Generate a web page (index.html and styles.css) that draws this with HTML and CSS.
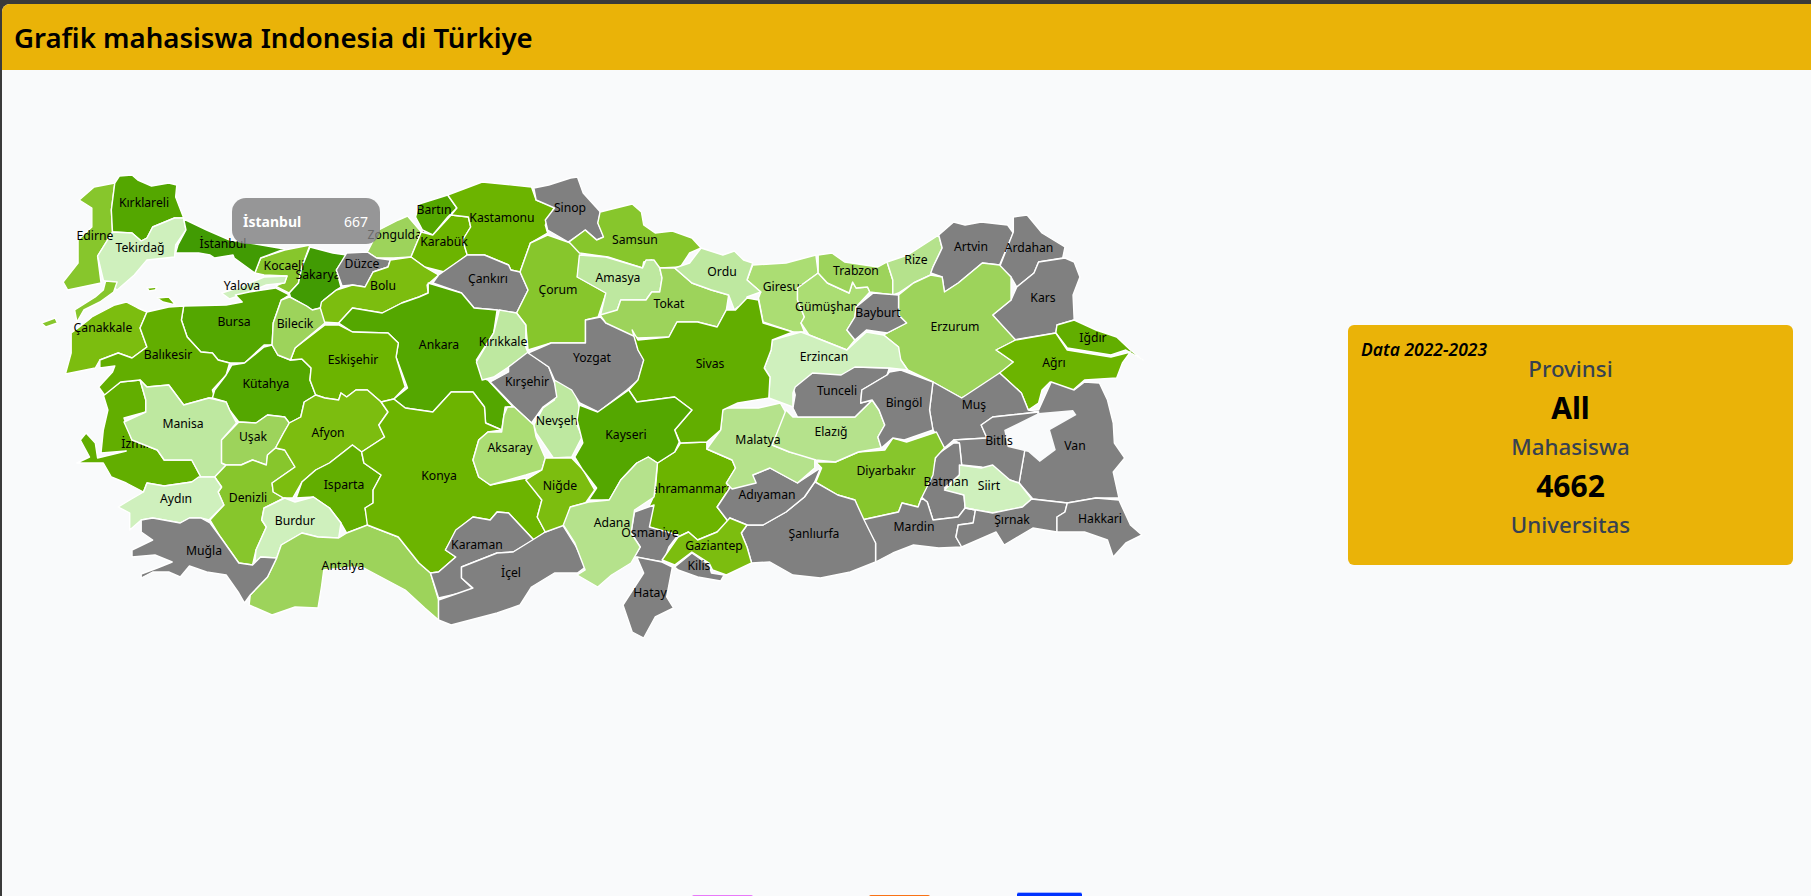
FILE: index.html
```html
<!DOCTYPE html>
<html lang="id">
<head>
    <meta charset="UTF-8" />
    <meta name="viewport" content="width=device-width, initial-scale=1.0" />
    <title>Grafik mahasiswa Indonesia di Türkiye</title>
    <link rel="stylesheet" href="styles.css">
</head>
<body>
    <div class="app">
        <header class="topbar">
            <h1>Grafik mahasiswa Indonesia di Türkiye</h1>
        </header>

        <main class="content">
            <div class="map-box">
                <svg class="map" viewBox="2 70 1148 750" width="1148" height="750">
                    <!-- provinsi yang labelnya tertutup tetangga digambar lebih dulu -->
                    <g transform="translate(-83 0) scale(1.148 1)">
                        <polygon class="s-h" points="665,443 688,442 688,449 710,460 713,468 705,483 708,488 697,507 707,522 697,532 680,540 672,532 663,537 638,527 637,508 643,493 645,463 660,452" />
                    </g>
                    <text x="691" y="488">Kahramanmaraş</text>
                    <g transform="scale(1.148 1)">
                        <polygon class="s-i" points="90,395 105,382 122,380 127,400 127,412 108,418 115,440 137,450 143,460 167,460 175,477 167,482 143,486 128,483 125,492 110,483 97,477 90,463 67,463 78,457 70,440 75,433 83,443 85,458 110,451 88,453 90,430 94,410" />
                    </g>
                    <text x="136" y="443">İzmir</text>
                    <g transform="scale(1.148 1)">
                        <polygon class="s-b" points="483,380 500,388 505,408 502,423 507,437 498,457 482,458 467,433 465,425 473,408 483,400" />
                        <polygon class="s-f" points="227,258 248,250 270,245 263,267 260,283 252,293 240,286 248,282 250,276 230,275 222,273" />
                        <polygon class="s-k" points="270,247 290,253 302,255 293,270 297,287 293,290 282,300 279,308 272,310 267,306 253,297 252,293 260,283 263,267" />
                        <polygon class="s-e" points="355,216 367,232 358,257 343,258 328,258 320,252 330,230 347,220" />
                    </g>
                    <text x="561" y="420">Nevşehir</text>
                    <text x="318" y="274">Sakarya</text>
                    <text x="398" y="234">Zonguldak</text>
                    <g transform="translate(-83 0) scale(1.148 1)">
                        <polygon class="s-d" points="728,265 757,263 783,255 785,273 767,288 767,300 773,317 770,323 773,332 763,332 737,322 733,298 735,292 723,280" />
                    </g>
                    <text x="785" y="286">Giresun</text>
                    <g transform="translate(-83 0) scale(1.148 1)">
                        <polygon class="s-d" points="785,273 793,283 812,293 815,282 818,288 828,287 830,292 818,307 817,317 810,330 817,340 810,350 777,335 770,323 773,317 767,300 767,288" />
                    </g>
                    <text x="830" y="306">Gümüşhane</text>

                    <g transform="scale(1.148 1)">
                        <polygon class="s-f" points="100,183 82,187 69,200 80,208 80,227 68,240 68,263 55,282 59,290 88,283 85,256 98,232 97,210" />
                        <polygon class="s-j" points="100,183 104,176 115,175 120,180 132,186 147,183 154,185 153,197 160,218 152,218 133,227 128,238 123,241 115,233 98,232 97,210" />
                        <polygon class="s-a" points="98,232 115,233 123,241 128,238 133,227 152,218 160,218 162,230 153,245 152,257 128,260 117,275 102,290 90,280 85,256" />
                        <polygon class="s-k" points="160,219 180,230 200,240 217,243 248,249 227,258 222,273 204,258 203,255 187,258 183,255 173,253 153,253 155,245 162,230" />
                        <polygon class="s-a" points="193,293 207,288 230,277 250,276 248,283 232,285 215,293 200,299" />
                        <polygon class="s-n" points="302,253 320,252 328,258 340,260 338,267 325,272 318,287 307,285 298,286 293,270" />
                        <polygon class="s-j" points="365,204 390,195 398,208 390,217 377,235 368,230 362,217" />
                        <polygon class="s-h" points="377,235 393,215 408,217 410,227 403,240 407,255 387,272 370,267 358,257 367,232" />
                        <polygon class="s-h" points="390,195 420,182 463,187 467,200 483,207 475,225 477,233 462,243 453,272 445,270 443,265 422,255 407,255 403,240 410,227 408,217 393,215 398,208" />
                        <polygon class="s-g" points="280,302 293,290 307,285 318,287 325,272 338,267 340,260 358,257 370,267 382,275 372,285 373,293 365,297 350,303 333,313 307,308 295,323 280,322 279,308" />
                        <polygon class="s-n" points="382,275 407,255 422,255 443,265 445,270 453,272 460,290 450,313 433,310 413,308 402,293 377,283" />
                        <polygon class="s-j" points="373,283 402,293 413,308 433,310 430,333 415,360 420,378 425,380 447,407 440,407 437,430 423,423 422,407 412,392 393,392 377,412 353,408 343,399 355,388 345,357 347,343 338,333 307,332 295,323 307,308 333,313 350,303 365,297 373,293" />
                        <polygon class="s-f" points="462,243 477,235 497,243 507,253 505,257 503,277 528,293 521,317 510,320 510,343 480,343 460,350 458,325 450,313 460,290 453,272" />
                        <polygon class="s-b" points="435,310 450,313 458,325 458,347 460,353 443,367 430,377 420,380 415,362 430,333" />
                        <polygon class="s-n" points="460,352 478,367 483,383 485,397 473,407 463,423 448,407 427,382 443,372 443,367" />
                        <polygon class="s-n" points="460,353 480,343 510,343 510,320 523,317 528,323 551,330 556,350 561,360 556,380 546,390 521,412 505,403 498,390 483,380 478,367" />
                        <polygon class="s-n" points="465,188 478,185 497,178 503,177 508,193 523,212 521,223 526,237 520,240 510,230 495,242 477,230 475,220 483,208 467,200" />
                        <polygon class="s-j" points="160,306 197,305 211,302 205,295 217,292 240,288 252,295 245,300 238,323 237,345 230,345 213,363 200,363 190,360 185,353 175,352 163,337 158,320" />
                        <polygon class="s-g" points="80,317 100,305 110,302 120,308 128,312 122,328 128,347 115,358 103,353 87,360 83,368 57,374 62,353 62,333 68,328 77,320" />
                        <polygon class="s-f" points="92,281 102,282 99,292 87,302 73,310 67,322 65,310 83,297 90,290" />
                        <polygon class="s-f" points="36,323 48,318 50,323 40,327" />
                        <polygon class="s-h" points="137,298 147,297 153,305 142,302" />
                        <polygon class="s-h" points="128,288 137,287 135,290 130,291" />
                        <polygon class="s-i" points="128,312 147,307 160,306 158,320 163,337 175,352 185,353 190,360 200,363 197,375 185,390 187,398 182,398 160,405 147,385 128,387 122,380 105,382 91,395 86,387 98,372 100,366 87,368 87,360 103,353 115,358 128,347 122,328" />
                        <polygon class="s-j" points="202,365 213,363 230,347 237,345 242,355 253,360 263,359 271,368 270,380 275,395 265,402 262,417 252,423 248,417 233,415 223,423 208,422 200,410 197,402 185,398 187,390 197,375" />
                        <polygon class="s-h" points="253,360 257,348 283,325 295,325 307,332 338,333 347,343 345,357 353,387 343,399 332,402 320,390 310,390 302,397 297,393 295,400 283,398 275,395 270,380 271,368 263,359" />
                        <polygon class="s-e" points="245,300 252,297 267,306 272,310 279,308 283,323 257,348 253,360 242,355 237,345 238,323" />
                        <polygon class="s-b" points="122,380 128,387 147,385 160,405 182,398 197,402 200,410 206,423 193,440 193,463 197,465 187,477 175,477 167,460 143,460 137,450 115,440 108,422 127,412 127,400" />
                        <polygon class="s-e" points="208,422 223,423 233,415 248,417 252,423 247,433 240,448 233,455 232,465 220,460 210,465 197,465 193,463 193,440" />
                        <polygon class="s-f" points="197,465 210,465 220,460 232,465 233,455 240,448 248,450 257,467 237,483 238,492 247,498 230,508 228,520 232,527 223,550 220,565 208,563 192,537 183,520 195,505 190,492 193,487 187,477" />
                        <polygon class="s-g" points="265,402 275,395 283,398 295,400 297,393 302,397 310,390 320,390 332,402 338,412 330,425 335,437 315,452 307,445 287,463 275,470 263,482 255,498 247,498 238,492 237,483 257,467 248,450 240,448 247,433 252,423 262,417" />
                        <polygon class="s-i" points="307,445 315,452 317,463 332,475 325,490 325,503 318,508 321,525 302,533 297,523 287,508 273,497 258,498 263,482 275,470 287,463" />
                        <polygon class="s-a" points="230,508 248,498 257,502 273,497 287,508 297,523 295,538 277,537 263,533 245,545 241,558 227,557 222,563 223,550 232,527 228,520" />
                        <polygon class="s-e" points="241,558 245,545 263,533 277,537 295,538 302,533 320,525 347,537 365,563 375,573 382,600 382,620 370,608 353,590 317,568 308,567 282,570 280,587 277,608 257,607 237,615 217,605 218,595 233,577" />
                        <polygon class="s-h" points="338,412 332,402 343,399 353,408 377,412 393,392 412,392 422,407 423,423 437,430 425,432 417,440 412,460 417,477 427,485 458,478 472,500 468,517 475,532 465,540 443,513 433,512 427,520 412,517 398,530 388,550 397,557 382,572 375,573 365,563 347,537 320,525 318,508 325,503 325,490 332,475 317,463 315,452 335,437 330,425" />
                        <polygon class="s-n" points="397,530 412,517 427,520 433,512 443,513 465,540 447,552 433,553 402,567 402,578 413,590 382,598 375,573 382,572 397,557 388,550" />
                        <polygon class="s-n" points="382,600 412,588 402,578 402,567 433,553 447,552 475,532 490,525 502,547 510,567 503,573 483,573 463,587 453,605 433,613 393,625 382,620" />
                        <polygon class="s-a" points="103,507 113,500 125,492 128,483 143,486 167,482 173,477 187,477 193,487 190,492 195,505 182,520 175,518 165,518 157,523 133,518 123,520 113,530 113,513" />
                        <polygon class="s-n" points="123,520 133,518 157,523 165,518 175,518 183,523 192,537 208,563 220,565 227,557 241,558 233,577 218,595 213,603 208,593 197,575 180,572 165,566 157,577 147,572 133,572 123,578 123,574 137,568 150,562 135,555 115,557 115,550 133,540 123,532" />
                        <polygon class="s-d" points="442,407 448,407 465,425 467,437 475,458 472,470 458,475 427,485 417,477 412,460 417,440 425,432 437,432 439,415" />
                        <polygon class="s-g" points="475,458 482,458 498,458 508,470 518,490 510,503 497,507 492,525 475,532 468,517 472,500 458,480 472,470" />
                    </g>

                    <g transform="translate(-83 0) scale(1.148 1)">
                        <polygon class="s-f" points="595,212 623,204 631,212 633,225 643,233 658,231 675,238 683,248 673,253 665,267 647,268 640,260 633,262 632,268 602,257 577,253 568,242 582,230 592,240 598,237 593,223" />
                        <polygon class="s-b" points="577,255 600,257 632,268 635,260 642,260 647,268 649,278 647,292 640,292 635,300 613,300 610,310 595,317 600,293 575,277" />
                        <polygon class="s-e" points="647,268 660,268 675,283 692,290 707,295 705,310 697,327 680,322 662,322 655,337 628,338 600,323 595,315 610,310 613,300 635,300 640,292 647,292 649,278" />
                        <polygon class="s-b" points="683,248 702,255 712,251 720,260 728,263 723,280 735,292 723,297 723,307 715,307 712,310 707,295 692,290 675,283 660,268 673,263" />
                        <polygon class="s-e" points="785,255 797,253 808,262 837,267 845,262 850,280 850,295 830,292 828,287 818,288 815,282 812,293 793,283 785,273" />
                        <polygon class="s-c" points="845,262 863,255 890,235 893,248 885,267 883,275 868,283 855,293 850,295 850,280" />
                        <polygon class="s-n" points="890,235 903,222 913,225 927,222 950,225 955,233 943,265 928,263 907,283 895,292 893,277 883,273 885,267 893,248" />
                        <polygon class="s-n" points="955,232 955,217 967,215 980,233 1000,247 998,258 977,262 973,273 958,287 953,277 943,267" />
                        <polygon class="s-n" points="977,262 1000,258 1008,262 1013,277 1007,295 1008,320 993,325 992,333 955,340 937,315 953,300 958,287 973,273" />
                        <polygon class="s-e" points="855,295 868,283 883,275 893,277 895,292 907,283 928,263 943,265 953,277 953,300 937,315 957,340 940,350 955,362 937,383 910,398 885,382 863,370 855,357 855,347 842,335 862,323 855,315" />
                        <polygon class="s-n" points="833,293 855,295 855,315 862,323 845,333 827,330 817,340 810,330 817,317 818,307" />
                        <polygon class="s-i" points="1008,320 1027,330 1045,337 1057,350 1068,360 1053,350 1040,355 1002,348 992,333 993,325" />
                        <polygon class="s-h" points="940,350 957,340 992,333 1002,350 1040,357 1057,352 1050,363 1045,378 1017,380 1005,392 987,382 980,390 977,403 968,410 962,393 943,373 955,362" />
                        <polygon class="s-n" points="977,410 988,382 1008,390 1017,382 1030,383 1037,400 1042,423 1043,443 1052,458 1042,472 1047,498 1027,498 1002,503 972,499 960,483 963,463 965,450 968,410" />
                        <polygon class="s-n" points="885,382 910,398 943,373 962,393 968,410 977,412 937,417 927,425 932,438 903,440 895,448 885,430 882,410" />
                        <polygon class="s-n" points="903,440 932,438 927,425 937,417 977,412 965,450 963,463 960,483 952,480 927,467 910,465 908,443" />
                        <polygon class="s-n" points="903,443 908,443 910,465 908,475 895,488 912,495 913,508 907,517 885,520 880,502 875,497 885,467 888,455" />
                        <polygon class="s-a" points="908,465 927,468 937,465 952,480 960,483 971,499 963,507 937,513 913,508 912,495 895,490 908,475" />
                        <polygon class="s-f" points="783,462 800,462 820,452 843,450 850,438 862,442 888,432 895,448 887,458 885,475 875,498 872,507 858,503 855,512 823,520 817,500 802,495 783,482 788,468" />
                        <polygon class="s-n" points="823,520 855,512 858,503 872,507 875,498 880,502 885,520 907,517 913,508 922,510 920,523 907,525 905,537 910,547 890,548 868,545 850,553 835,562 835,543" />
                        <polygon class="s-n" points="913,508 937,513 963,507 971,499 1002,503 1000,512 993,517 993,532 972,528 947,545 940,532 910,547 905,537 907,525 920,523 922,510" />
                        <polygon class="s-n" points="1002,503 1027,498 1047,500 1057,525 1067,535 1053,543 1042,557 1037,540 1017,532 993,532 993,517 1000,512" />
                        <polygon class="s-n" points="718,533 723,525 737,525 757,512 773,497 782,482 802,495 817,500 825,520 835,543 835,562 813,572 787,578 763,575 743,562 727,563 723,547" />
                        <polygon class="s-n" points="697,507 708,488 728,475 743,468 767,483 787,468 782,482 773,497 757,512 737,525 723,525 708,518 707,522" />
                        <polygon class="s-c" points="688,449 700,430 702,408 733,408 752,403 757,413 745,445 760,452 782,458 782,468 767,483 743,468 728,475 731,483 710,489 705,483 713,468 710,460" />
                        <polygon class="s-c" points="757,410 763,417 817,417 832,400 838,410 843,425 837,437 840,448 820,452 800,462 783,460 760,452 745,445" />
                        <polygon class="s-n" points="763,387 780,373 817,367 847,368 845,375 823,390 822,403 832,400 817,417 767,417 763,408 765,395" />
                        <polygon class="s-n" points="847,372 857,370 885,382 882,410 885,430 860,440 850,438 840,448 837,437 843,425 838,410 832,400 822,403 823,390 845,375" />
                        <polygon class="s-a" points="745,340 770,332 777,335 810,350 827,332 842,335 855,347 857,360 863,370 847,368 817,367 805,375 780,373 765,387 763,393 763,407 742,398 743,377 738,368 744,350" />
                        <polygon class="s-i" points="733,300 737,323 763,332 745,340 744,350 738,368 743,377 742,398 715,403 702,410 700,430 688,442 665,443 660,430 675,410 660,397 627,402 620,390 628,380 633,360 628,350 623,330 628,340 655,337 662,322 680,322 697,327 705,310 713,310 723,298" />
                        <polygon class="s-j" points="593,412 620,390 627,402 660,397 675,410 660,430 664,442 660,452 645,463 637,457 627,463 613,480 603,500 585,500 592,488 580,470 573,457 580,443 575,420 577,405" />
                        <polygon class="s-n" points="642,505 625,512 622,533 630,547 625,557 650,562 655,547 663,535 638,527" />
                        <polygon class="s-c" points="637,457 645,463 642,497 625,510 622,533 630,547 622,563 605,575 593,587 575,575 582,570 573,543 563,525 569,507 585,502 603,500 613,480 627,463" />
                        <polygon class="s-g" points="708,518 723,525 718,533 723,547 727,563 705,575 693,570 690,563 675,552 660,565 649,560 663,537 672,532 680,540 697,532" />
                        <polygon class="s-n" points="660,567 675,553 690,565 692,573 703,575 700,581 680,577 663,570" />
                        <polygon class="s-n" points="627,557 649,562 658,567 653,597 659,608 643,617 633,638 623,632 615,605 633,573" />
                        <polygon class="lake" points="947,430 977,413 1007,410 1010,415 987,430 992,450 978,462 968,452 950,447" />
                    </g>

                    <text x="144" y="202">Kırklareli</text>
                    <text x="95" y="235">Edirne</text>
                    <text x="140" y="247">Tekirdağ</text>
                    <text x="223" y="243">İstanbul</text>
                    <text x="284" y="265">Kocaeli</text>
                    <text x="362" y="263">Düzce</text>
                    <text x="434" y="209">Bartın</text>
                    <text x="502" y="217">Kastamonu</text>
                    <text x="444" y="241">Karabük</text>
                    <text x="570" y="207">Sinop</text>
                    <text x="242" y="285">Yalova</text>
                    <text x="383" y="285">Bolu</text>
                    <text x="488" y="278">Çankırı</text>
                    <text x="558" y="289">Çorum</text>
                    <text x="234" y="321">Bursa</text>
                    <text x="295" y="323">Bilecik</text>
                    <text x="103" y="327">Çanakkale</text>
                    <text x="439" y="344">Ankara</text>
                    <text x="503" y="341">Kırıkkale</text>
                    <text x="168" y="354">Balıkesir</text>
                    <text x="353" y="359">Eskişehir</text>
                    <text x="266" y="383">Kütahya</text>
                    <text x="527" y="381">Kırşehir</text>
                    <text x="183" y="423">Manisa</text>
                    <text x="253" y="436">Uşak</text>
                    <text x="328" y="432">Afyon</text>
                    <text x="510" y="447">Aksaray</text>
                    <text x="176" y="498">Aydın</text>
                    <text x="248" y="497">Denizli</text>
                    <text x="344" y="484">Isparta</text>
                    <text x="439" y="475">Konya</text>
                    <text x="560" y="485">Niğde</text>
                    <text x="295" y="520">Burdur</text>
                    <text x="204" y="550">Muğla</text>
                    <text x="477" y="544">Karaman</text>
                    <text x="343" y="565">Antalya</text>
                    <text x="511" y="572">İçel</text>
                    <text x="635" y="239">Samsun</text>
                    <text x="722" y="271">Ordu</text>
                    <text x="618" y="277">Amasya</text>
                    <text x="856" y="270">Trabzon</text>
                    <text x="916" y="259">Rize</text>
                    <text x="971" y="246">Artvin</text>
                    <text x="1029" y="247">Ardahan</text>
                    <text x="669" y="303">Tokat</text>
                    <text x="878" y="312">Bayburt</text>
                    <text x="1043" y="297">Kars</text>
                    <text x="955" y="326">Erzurum</text>
                    <text x="1093" y="337">Iğdır</text>
                    <text x="592" y="357">Yozgat</text>
                    <text x="710" y="363">Sivas</text>
                    <text x="824" y="356">Erzincan</text>
                    <text x="1054" y="362">Ağrı</text>
                    <text x="837" y="390">Tunceli</text>
                    <text x="904" y="402">Bingöl</text>
                    <text x="974" y="404">Muş</text>
                    <text x="626" y="434">Kayseri</text>
                    <text x="758" y="439">Malatya</text>
                    <text x="831" y="431">Elazığ</text>
                    <text x="999" y="440">Bitlis</text>
                    <text x="1075" y="445">Van</text>
                    <text x="886" y="470">Diyarbakır</text>
                    <text x="767" y="494">Adıyaman</text>
                    <text x="946" y="481">Batman</text>
                    <text x="989" y="485">Siirt</text>
                    <text x="612" y="522">Adana</text>
                    <text x="650" y="532">Osmaniye</text>
                    <text x="914" y="526">Mardin</text>
                    <text x="1012" y="519">Şırnak</text>
                    <text x="1100" y="518">Hakkari</text>
                    <text x="814" y="533">Şanlıurfa</text>
                    <text x="714" y="545">Gaziantep</text>
                    <text x="699" y="565">Kilis</text>
                    <text x="650" y="592">Hatay</text>
                </svg>
                <div class="map-tooltip">
                    <b>İstanbul</b>
                    <span>667</span>
                </div>
            </div>

            <div class="card">
                <p class="card-year">Data 2022-2023</p>
                <p class="card-label">Provinsi</p>
                <p class="card-value">All</p>
                <p class="card-label">Mahasiswa</p>
                <p class="card-value">4662</p>
                <p class="card-label">Universitas</p>
            </div>
        </main>

        <div class="legend">
            <button class="legend-btn pink"></button>
            <button class="legend-btn orange"></button>
            <button class="legend-btn blue"></button>
        </div>
    </div>
</body>
</html>
```

FILE: styles.css
```css
* {
    margin: 0;
    padding: 0;
    box-sizing: border-box;
}

html, body {
    height: 100%;
    overflow: hidden;
}

body {
    font-family: "Noto Sans", sans-serif;
    background-color: #3a3a3a;
    padding: 4px 0 0 2px;
}

.app {
    height: 892px;
    background-color: #f9fafb;
    border-top-left-radius: 8px;
    overflow: hidden;
}

.topbar {
    height: 66px;
    background-color: #eab308;
    display: flex;
    align-items: center;
    padding-left: 12px;
}

.topbar h1 {
    font-size: 27.6px;
    font-weight: 600;
    color: #000;
}

.content {
    height: 750px;
    display: flex;
    align-items: center;
}

.map-box {
    position: relative;
    width: 1148px;
    height: 750px;
    flex-shrink: 0;
}

.map {
    display: block;
}

.map polygon {
    stroke: #fff;
    stroke-width: 1.4;
    stroke-linejoin: round;
    vector-effect: non-scaling-stroke;
}

.map text {
    font-size: 12.2px;
    fill: #000;
    text-anchor: middle;
    dominant-baseline: central;
}

.map .lake {
    fill: #f9fafb;
    stroke: none;
}

.s-a { fill: #cff0bd; }
.s-b { fill: #bee8a0; }
.s-c { fill: #b5e28c; }
.s-d { fill: #abdd73; }
.s-e { fill: #9dd35b; }
.s-f { fill: #87c62c; }
.s-g { fill: #7cbd0f; }
.s-h { fill: #6cb400; }
.s-i { fill: #62ae00; }
.s-j { fill: #54a700; }
.s-k { fill: #419b03; }
.s-n { fill: #808080; }

.map-tooltip {
    position: absolute;
    left: 230px;
    top: 128px;
    width: 148px;
    height: 46px;
    padding: 0 12px 0 11px;
    border-radius: 14px;
    background-color: rgba(128, 128, 128, 0.82);
    color: #fff;
    font-size: 14px;
    display: flex;
    align-items: center;
    justify-content: space-between;
}

.card {
    position: relative;
    width: 445px;
    height: 240px;
    margin-left: 198px;
    border-radius: 6px;
    background-color: #eab308;
    display: flex;
    flex-direction: column;
    align-items: center;
    justify-content: center;
    padding-top: 2px;
}

.card-year {
    position: absolute;
    left: 13px;
    top: 12px;
    font-size: 17.5px;
    font-weight: 600;
    font-style: italic;
    color: #000;
}

.card-label {
    font-size: 22.3px;
    font-weight: 500;
    line-height: 39px;
    color: #374151;
}

.card-value {
    font-size: 30px;
    font-weight: 700;
    line-height: 39px;
    color: #000;
}

.legend {
    display: flex;
    align-items: flex-start;
    height: 76px;
    padding: 72px 0 0 690px;
}

.legend-btn {
    width: 61px;
    height: 40px;
    border: none;
    border-radius: 2px;
}

.legend-btn.pink {
    margin-top: 3px;
    background-color: #e879f9;
}

.legend-btn.orange {
    margin: 3px 0 0 116px;
    background-color: #f97316;
}

.legend-btn.blue {
    width: 65px;
    margin-left: 87px;
    background-color: #0033ff;
    border-top: 1px solid #a9b8ff;
}
```
